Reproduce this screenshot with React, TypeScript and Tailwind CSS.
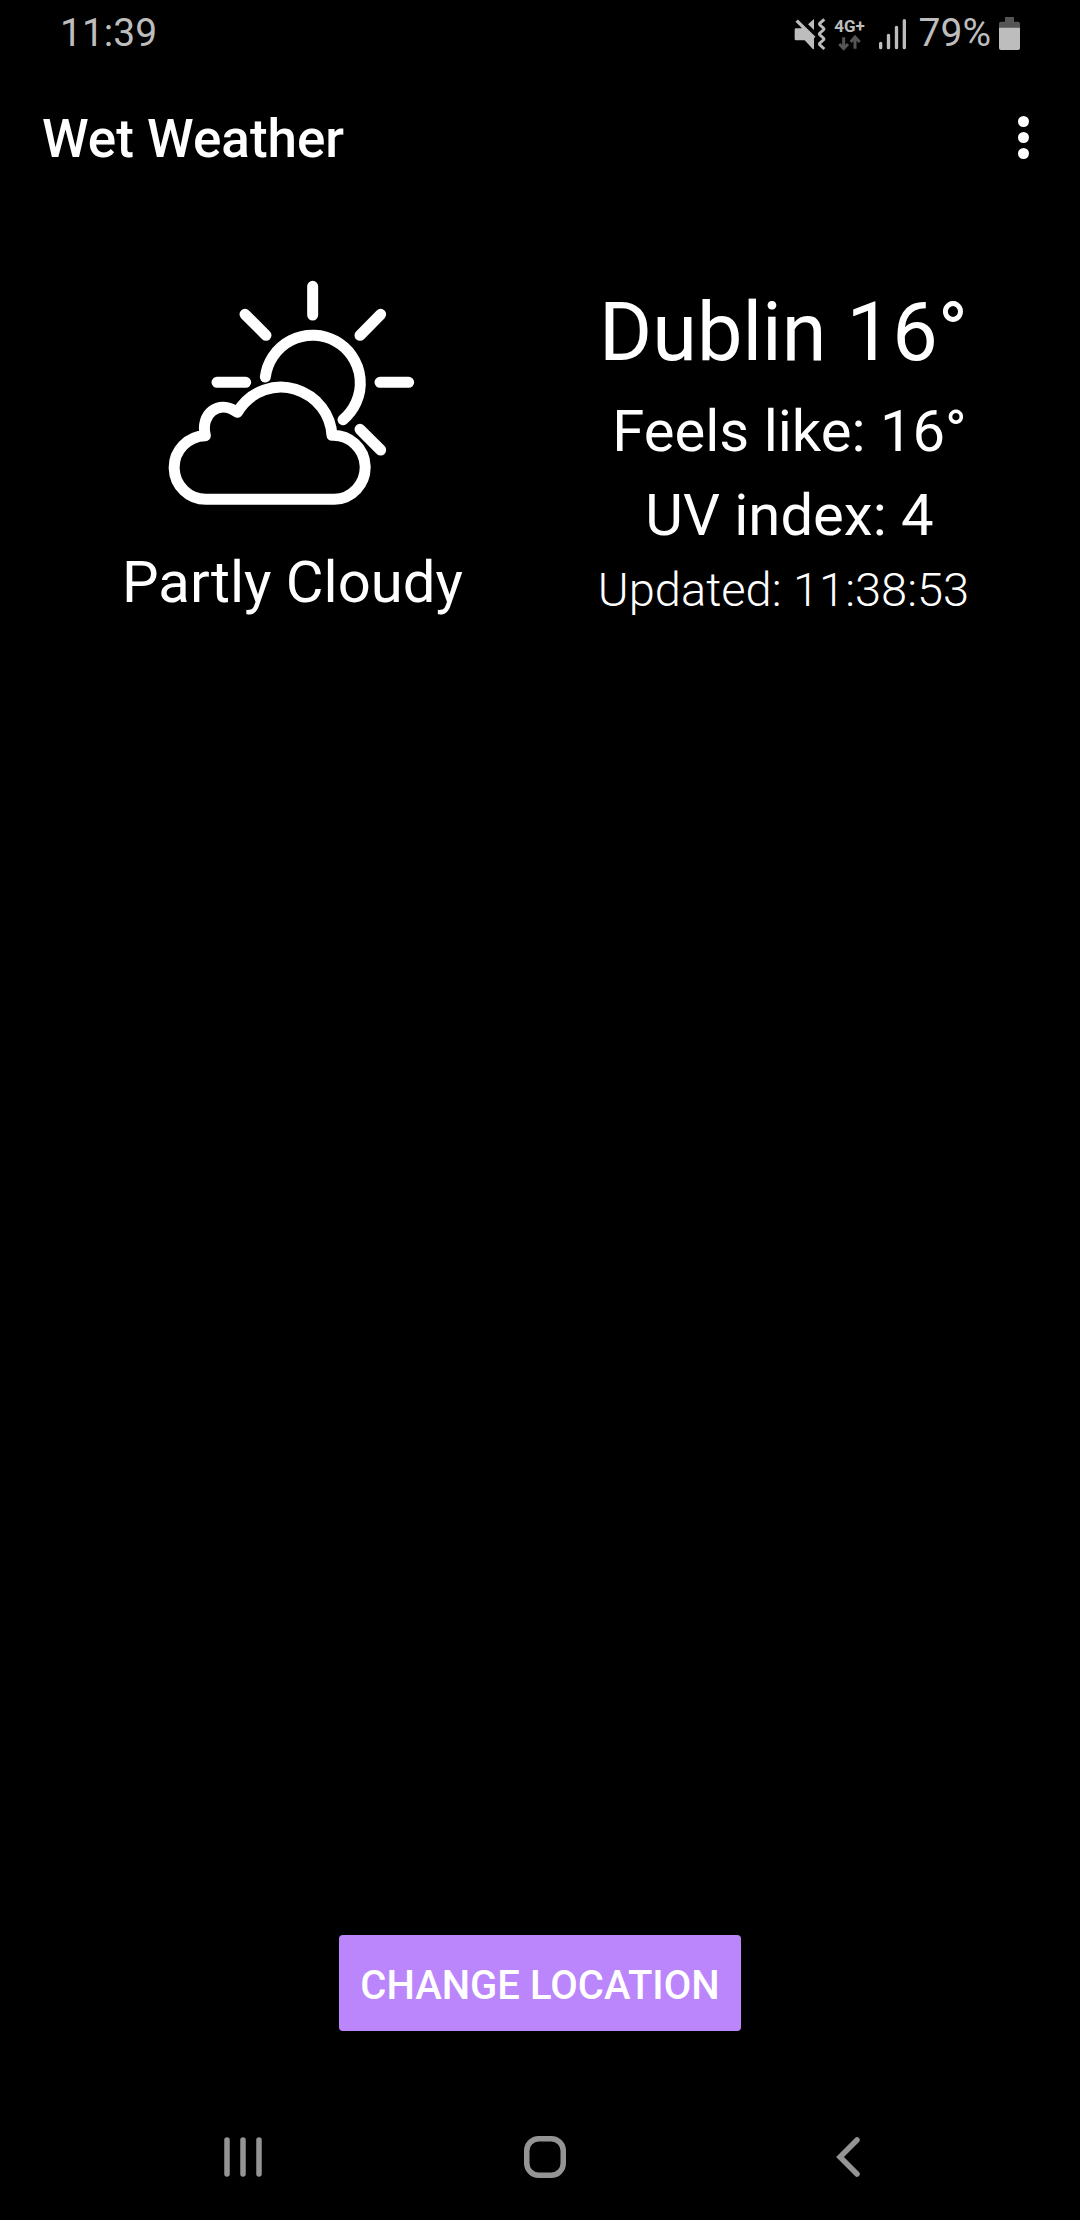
function MutedIcon() {
  return (
    <svg viewBox="36 42 96 102" className="h-[34px] w-8 text-[#bdbdbd]" aria-label="Vibrate">
      <path d="M42 76H58L62 72L96 106V138L93 139L68 112H42Q38 112 38 108V80Q38 76 42 76Z" fill="currentColor" />
      <path d="M44 53L97 105" stroke="currentColor" strokeWidth="10" />
      <path d="M96 48V81L78 64Z" fill="currentColor" />
      <path
        d="M127 49L114 60Q111 63 114 66L124 75Q127 78 124 81L114 90Q111 93 114 96L124 105Q127 108 124 111L114 120Q111 123 114 126L127 138"
        fill="none"
        stroke="currentColor"
        strokeWidth="9"
      />
    </svg>
  );
}

function DataIcon() {
  return (
    <span className="flex w-8 flex-col items-center font-bold text-[#bdbdbd]">
      <span className="text-[17px] leading-[18px]">4G+</span>
      <svg viewBox="172 98 69 46" className="h-4 w-[23px] text-[#555555]" aria-hidden="true">
        <path
          d="M189 104V137M176 124L189 138L202 124M223 138V104M210 118L223 103L237 118"
          fill="none"
          stroke="currentColor"
          strokeWidth="9"
        />
      </svg>
    </span>
  );
}

function SignalIcon() {
  return (
    <svg viewBox="288 46 87 96" className="h-8 w-[29px]" aria-label="Signal">
      <path
        d="M296 122V135M319.500 98V135M343.500 74V135M367 54V135"
        stroke="#bdbdbd"
        strokeWidth="10"
        strokeLinecap="round"
      />
    </svg>
  );
}

function BatteryIcon() {
  return (
    <svg viewBox="657 45 63 99" className="h-[33px] w-[21px]" aria-label="Battery">
      <path d="M675 45H702V59H714Q720 59 720 65V80H657V65Q657 59 663 59H675Z" fill="#555555" />
      <path d="M657 77H720V138Q720 144 714 144H663Q657 144 657 138Z" fill="#bdbdbd" />
    </svg>
  );
}

function PartlyCloudyIcon() {
  return (
    <svg
      viewBox="39 0 780 780"
      className="size-[260px]"
      fill="none"
      stroke="white"
      strokeWidth="33"
      strokeLinecap="round"
      strokeLinejoin="round"
      aria-hidden="true"
    >
      <path d="M488 79V165M285 163L348 226M692 163L630 226M201 367H287M690 367H776M630 508L692 570" />
      <path d="M346 351A143 143 0 1 1 579 479" />
      <path d="M170 718A95.500 95.500 0 0 1 166 527C150 462 205 417 262 457C304 387 380 370 436 388C505 410 542 465 546 526A95.500 95.500 0 0 1 553 718Z" />
    </svg>
  );
}

export default function App() {
  return (
    <div className="flex min-h-screen flex-col bg-black font-[Roboto,sans-serif] text-white">
      <div className="flex h-[67px] items-center justify-between px-[60px] text-[39px] text-[#bdbdbd]">
        <span>11:39</span>
        <div className="flex items-center">
          <MutedIcon />
          <span className="ml-2">
            <DataIcon />
          </span>
          <span className="ml-3">
            <SignalIcon />
          </span>
          <span className="ml-3">79%</span>
          <span className="ml-2">
            <BatteryIcon />
          </span>
        </div>
      </div>

      <header className="flex h-36 items-center justify-between pr-[45px] pl-[42px]">
        <h1 className="text-[53px] leading-none font-medium">Wet Weather</h1>
        <button type="button" aria-label="More options" className="flex h-20 w-6 flex-col items-center gap-[5px] pt-[17px]">
          <span className="size-[11px] rounded-full bg-white" />
          <span className="size-[11px] rounded-full bg-white" />
          <span className="size-[11px] rounded-full bg-white" />
        </button>
      </header>

      <main className="flex flex-1 flex-col justify-between">
        <section className="grid grid-cols-2 pr-[51px] pl-[47px] text-center text-[58px] leading-[84px]">
          <div className="flex flex-col items-center gap-5 pt-[49px]">
            <PartlyCloudyIcon />
            <p>Partly Cloudy</p>
          </div>
          <div className="pt-[66px]">
            <h2 className="text-[81px] leading-[112px]">Dublin 16°</h2>
            <p className="pl-3">Feels like: 16°</p>
            <p className="pl-3">UV index: 4</p>
            <p className="text-[47px] leading-[66px] font-light">Updated: 11:38:53</p>
          </div>
        </section>
        <button
          type="button"
          className="mb-[63px] self-center rounded bg-[#bb86fc] px-[21px] pt-[27px] pb-[21px] text-[40px] leading-[48px] font-medium uppercase"
        >
          Change location
        </button>
      </main>

      <nav className="grid h-[126px] grid-cols-3 items-center pr-[81px] pl-[92px] text-[#949494]">
        <button type="button" aria-label="Recent apps" className="flex h-20 items-center justify-center">
          <svg viewBox="0 0 38 40" className="h-10 w-[38px]" stroke="currentColor" strokeWidth="5.500" strokeLinecap="round">
            <path d="M3 3V37M19 3V37M35 3V37" />
          </svg>
        </button>
        <button type="button" aria-label="Home" className="flex h-20 items-center justify-center">
          <svg viewBox="0 0 42 42" className="size-[42px]" fill="none" stroke="currentColor" strokeWidth="5.500">
            <rect x="2.750" y="2.750" width="36.500" height="36.500" rx="12" />
          </svg>
        </button>
        <button type="button" aria-label="Back" className="flex h-20 items-center justify-center">
          <svg viewBox="0 0 24 40" className="h-10 w-6" fill="none" stroke="currentColor" strokeWidth="5.500" strokeLinecap="round">
            <path d="M21 3L4 20L21 37" />
          </svg>
        </button>
      </nav>
    </div>
  );
}
